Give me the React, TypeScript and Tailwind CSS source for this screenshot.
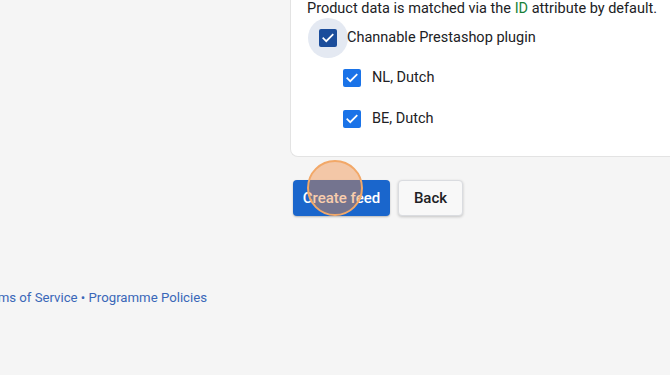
import React from "react";

function Check({ dark }: { dark?: boolean }) {
  return (
    <div
      className={`w-[18px] h-[18px] rounded-[2px] flex items-center justify-center ${
        dark ? "bg-[#1b4d9b]" : "bg-[#1a73e8]"
      }`}
    >
      <svg width="14" height="14" viewBox="0 0 24 24" fill="none">
        <path d="M4 12.5l5 5L20 6.5" stroke="white" strokeWidth="3" strokeLinecap="square" />
      </svg>
    </div>
  );
}

export default function App() {
  return (
    <div
      className="relative w-[670px] h-[375px] overflow-hidden bg-[#f5f5f5] text-[#202124]"
      style={{ fontFamily: "Roboto, 'Liberation Sans', sans-serif" }}
    >
      <div className="ml-[290px] w-[420px] bg-white border border-t-0 border-r-0 border-[#e3e3e3] rounded-bl-[8px] pl-[16px] pb-[17px]">
        <div className="text-[14.5px] leading-[20px] -mt-[1px] whitespace-nowrap">
          Product data is matched via the <span className="text-[#188038]">ID</span> attribute by default.
        </div>
        <div className="flex items-center h-[40px] -mt-[1px] pl-[1px]">
          <div className="w-[40px] h-[40px] rounded-full bg-[#e4e9f2] flex items-center justify-center">
            <Check dark />
          </div>
          <span className="text-[14.5px] -ml-[1px]">Channable Prestashop plugin</span>
        </div>
        <div className="flex items-center h-[40px] pl-[36px]">
          <Check />
          <span className="text-[14.5px] ml-[11px]">NL, Dutch</span>
        </div>
        <div className="flex items-center h-[40px] pl-[36px] mt-[1px]">
          <Check />
          <span className="text-[14.5px] ml-[11px]">BE, Dutch</span>
        </div>
      </div>

      <div className="ml-[293px] mt-[23px] flex gap-[8px]">
        <button className="h-[36px] w-[97px] rounded-[4px] bg-[#1a66cc] text-white text-[15px] font-medium shadow-[0_1px_2px_rgba(0,0,0,0.25)]">
          Create feed
        </button>
        <button className="h-[36px] w-[65px] rounded-[4px] bg-[#f8f8f8] border border-[#dadce0] text-[#202124] text-[15px] font-medium shadow-[0_1px_3px_rgba(0,0,0,0.2)]">
          Back
        </button>
      </div>

      <div className="mt-[72px] w-[207px] flex justify-end">
        <span className="whitespace-nowrap text-[13.2px] text-[#3a67b8]">
          Terms of Service • Programme Policies
        </span>
      </div>

      <div className="absolute left-[307px] top-[160px] w-[56px] h-[56px] rounded-full bg-[rgba(240,135,60,0.42)] border-[2px] border-[#f2a868]" />
    </div>
  );
}
